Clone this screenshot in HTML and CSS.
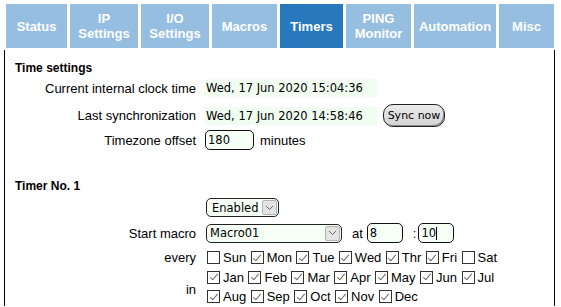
FILE: index.html
```html
<!DOCTYPE html>
<html>
<head>
<meta charset="utf-8">
<link rel="stylesheet" href="styles.css">
</head>
<body>
<div class="page">
  <nav class="tabs">
    <a class="tab">Status</a>
    <a class="tab">IP<br>Settings</a>
    <a class="tab">I/O<br>Settings</a>
    <a class="tab">Macros</a>
    <a class="tab active">Timers</a>
    <a class="tab">PING<br>Monitor</a>
    <a class="tab">Automation</a>
    <a class="tab">Misc</a>
  </nav>
  <div class="panel">
    <h3 class="sec">Time settings</h3>
    <div class="row r1"><span class="lbl">Current internal clock time</span><span class="val">Wed, 17 Jun 2020 15:04:36</span></div>
    <div class="row r2"><span class="lbl">Last synchronization</span><span class="val">Wed, 17 Jun 2020 14:58:46</span><button class="btn">Sync now</button></div>
    <div class="row r3"><span class="lbl">Timezone offset</span><input class="inp w49" value="180"><span class="unit">minutes</span></div>

    <h3 class="sec sec2">Timer No. 1</h3>
    <div class="row r4"><span class="lbl"></span>
      <span class="sel sel-en"><select><option>Enabled</option></select><span class="arr"><svg width="9" height="6" viewBox="0 0 9 6"><polyline points="1,1 4.5,4.5 8,1" fill="none" stroke="#666" stroke-width="1"/></svg></span></span>
    </div>
    <div class="row r5"><span class="lbl">Start macro</span>
      <span class="sel sel-mac"><select><option>Macro01</option></select><span class="arr"><svg width="9" height="6" viewBox="0 0 9 6"><polyline points="1,1 4.5,4.5 8,1" fill="none" stroke="#666" stroke-width="1"/></svg></span></span>
      <span class="at">at</span><input class="inp w36" value="8"><span class="colon">:</span><span class="field"><input class="inp w36" value="10"><span class="caret"></span></span>
    </div>
    <div class="row r6"><span class="lbl">every</span>
      <div class="checks">
        <label class="ck"><input type="checkbox">Sun</label>
        <label class="ck"><input type="checkbox" checked>Mon</label>
        <label class="ck"><input type="checkbox" checked>Tue</label>
        <label class="ck"><input type="checkbox" checked>Wed</label>
        <label class="ck"><input type="checkbox" checked>Thr</label>
        <label class="ck"><input type="checkbox" checked>Fri</label>
        <label class="ck"><input type="checkbox">Sat</label>
      </div>
    </div>
    <div class="months"><span class="lbl lbl-in">in</span>
      <div class="mcol">
        <div class="checks mrow">
          <label class="ck"><input type="checkbox" checked>Jan</label>
          <label class="ck"><input type="checkbox" checked>Feb</label>
          <label class="ck"><input type="checkbox" checked>Mar</label>
          <label class="ck"><input type="checkbox" checked>Apr</label>
          <label class="ck"><input type="checkbox" checked>May</label>
          <label class="ck"><input type="checkbox" checked>Jun</label>
          <label class="ck"><input type="checkbox" checked>Jul</label>
        </div>
        <div class="checks mrow">
          <label class="ck"><input type="checkbox" checked>Aug</label>
          <label class="ck"><input type="checkbox" checked>Sep</label>
          <label class="ck"><input type="checkbox" checked>Oct</label>
          <label class="ck"><input type="checkbox" checked>Nov</label>
          <label class="ck"><input type="checkbox" checked>Dec</label>
        </div>
      </div>
    </div>
  </div>
</div>
</body>
</html>
```
FILE: styles.css
```css
body {
  margin: 0;
  background: #fff;
  color: #000;
  font-family: "Liberation Sans", Arial, sans-serif;
  font-size: 13px;
}
.page {
  margin: 4px 0 0 4px;
  width: 551px;
}
.tabs {
  display: grid;
  grid-template-columns: 61px 68px 68px 65px 63px 65px 82px 55px;
  column-gap: 3px;
  padding-left: 2px;
  height: 44px;
}
.tab {
  display: flex;
  align-items: center;
  justify-content: center;
  text-align: center;
  background: #96bee1;
  color: #fff;
  font-weight: bold;
  font-size: 13px;
  line-height: 15px;
  text-decoration: none;
}
.tab.active {
  background: #2878be;
}
.panel {
  margin-top: 2px;
  border-left: 1px solid #000;
  border-right: 1px solid #000;
  padding: 11px 0 0 0;
}
.sec {
  margin: 0 0 0 10px;
  font-size: 12px;
  font-weight: bold;
  line-height: 14px;
}
.sec2 {
  margin-top: 29px;
}
.row {
  display: flex;
  align-items: center;
}
.lbl {
  flex: none;
  width: 191px;
  margin-right: 8px;
  text-align: right;
}
.r1 { height: 18px; margin-top: 4px; }
.r2 { height: 23px; margin-top: 7px; }
.r3 { height: 20px; margin-top: 3px; }
.r4 { height: 19px; margin-top: 5px; }
.r5 { height: 20px; margin-top: 6px; }
.r6 { height: 19px; margin-top: 5px; }
.val {
  width: 173px;
  height: 18px;
  box-sizing: border-box;
  padding-left: 2px;
  background: #f0fdf0;
  border-radius: 3px;
  font-family: "DejaVu Sans", sans-serif;
  font-size: 11.5px;
  line-height: 18px;
}
.btn {
  margin: 0 0 0 6px;
  width: 62px;
  height: 23px;
  padding: 0;
  border: 1px solid #222;
  border-radius: 10px;
  background: linear-gradient(#ececec, #d2d2d2);
  box-shadow: inset -1px -1px 0 #8a8a8a;
  font-family: "DejaVu Sans", sans-serif;
  font-size: 11px;
  color: #000;
}
.inp {
  height: 20px;
  box-sizing: border-box;
  margin: 0;
  padding: 0 0 0 2px;
  border: 1px solid #111;
  border-radius: 5px;
  background: #f6fff6;
  font-family: "DejaVu Sans", sans-serif;
  font-size: 11.5px;
  color: #000;
  outline: none;
}
.r3 .inp { margin-left: 1px; }
.w49 { width: 49px; }
.w36 { width: 36px; }
.unit { margin-left: 6px; }
.sel {
  position: relative;
  display: inline-block;
  margin-left: 2px;
  height: 19px;
}
.sel select {
  -webkit-appearance: none;
  appearance: none;
  display: block;
  height: 19px;
  box-sizing: border-box;
  margin: 0;
  padding: 0 0 0 5px;
  border: 1px solid #222;
  border-radius: 5px;
  background: #f6fff6;
  font-family: "DejaVu Sans", sans-serif;
  font-size: 11.5px;
  color: #000;
}
.sel-en select { width: 73px; }
.sel-mac select { width: 136px; padding-left: 3px; }
.arr {
  position: absolute;
  right: 2px;
  top: 2px;
  width: 15px;
  height: 15px;
  box-sizing: border-box;
  border: 1px solid #b4b4b4;
  border-radius: 2px;
  background: #e4e4e4;
  display: flex;
  align-items: center;
  justify-content: center;
  pointer-events: none;
}
.at { margin: 0 4px 0 10px; }
.colon { margin: 0 2px 0 10px; }
.field {
  position: relative;
  display: inline-block;
  height: 20px;
}
.field .inp { display: block; }
.caret {
  position: absolute;
  left: 18px;
  top: 4px;
  width: 1px;
  height: 13px;
  background: #000;
}
.checks {
  display: flex;
  align-items: center;
  margin-left: 3px;
}
.ck {
  display: inline-flex;
  align-items: center;
  margin-right: 4.5px;
  white-space: nowrap;
}
.ck input {
  -webkit-appearance: none;
  appearance: none;
  position: relative;
  width: 13px;
  height: 13px;
  box-sizing: border-box;
  margin: 0 3px 0 0;
  border: 1px solid #333;
  background: #fff;
}
.ck input:checked::after {
  content: "";
  position: absolute;
  left: 3.5px;
  top: 0.5px;
  width: 3px;
  height: 7px;
  border: solid #6a6a6a;
  border-width: 0 1.3px 1.3px 0;
  transform: rotate(40deg);
}
.months {
  display: flex;
}
.lbl-in {
  align-self: center;
  padding-top: 5px;
}
.mrow { height: 20px; }
.mrow + .mrow { height: 19px; }
```
